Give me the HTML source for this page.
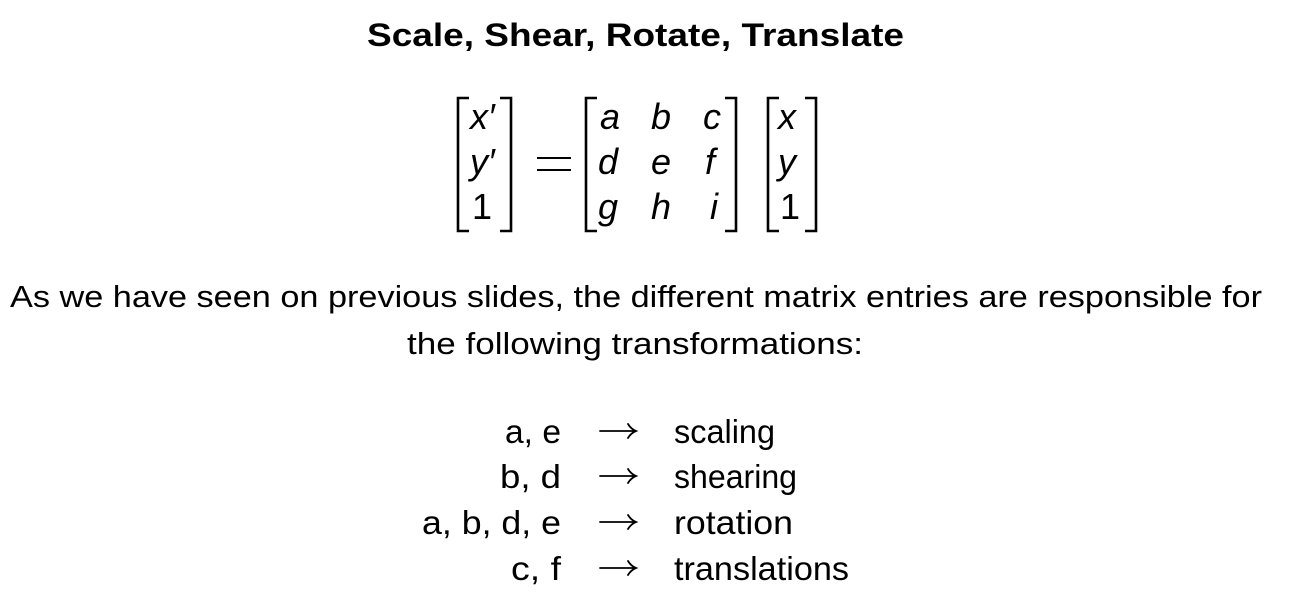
<!DOCTYPE html>
<html><head><meta charset="utf-8"><style>
html,body{margin:0;padding:0;background:#fff;width:1290px;height:604px;overflow:hidden}
svg{display:block}
text{font-family:"Liberation Sans",sans-serif;fill:#000}
.it{font-style:italic}
</style></head><body>
<svg width="1290" height="604" viewBox="0 0 1290 604">
<text x="367" y="46" font-size="32" font-weight="bold" textLength="537" lengthAdjust="spacingAndGlyphs">Scale, Shear, Rotate, Translate</text>
<g fill="none" stroke="#000" stroke-width="2.6">
<path d="M469 98H458V231H469"/>
<path d="M500 98H511V231H500"/>
<path d="M597 98H586V231H597"/>
<path d="M725 98H736V231H725"/>
<path d="M779 98H768V231H779"/>
<path d="M805 98H816V231H805"/>
<path d="M537 158H571M537 170H571" stroke-width="2"/>
</g>
<g font-size="36" class="it">
<text x="470" y="129">x′</text>
<text x="470" y="174">y′</text>
<text x="600" y="129">a</text>
<text x="651" y="129">b</text>
<text x="703" y="129">c</text>
<text x="598" y="174">d</text>
<text x="651" y="174">e</text>
<text x="705" y="174">f</text>
<text x="598" y="219">g</text>
<text x="651" y="219">h</text>
<text x="710" y="219">i</text>
<text x="778" y="129">x</text>
<text x="778" y="174">y</text>
</g>
<text x="472" y="219" font-size="36">1</text>
<text x="780" y="219" font-size="36">1</text>
<text x="10" y="307" font-size="31" textLength="1252" lengthAdjust="spacingAndGlyphs">As we have seen on previous slides, the different matrix entries are responsible for</text>
<text x="407" y="354" font-size="31" textLength="456" lengthAdjust="spacingAndGlyphs">the following transformations:</text>
<g font-size="33">
<text x="505" y="443" textLength="56" lengthAdjust="spacingAndGlyphs">a, e</text>
<text x="500" y="488" textLength="61" lengthAdjust="spacingAndGlyphs">b, d</text>
<text x="422" y="534" textLength="139" lengthAdjust="spacingAndGlyphs">a, b, d, e</text>
<text x="511" y="580" textLength="50" lengthAdjust="spacingAndGlyphs">c, f</text>
<text x="674" y="443" textLength="101" lengthAdjust="spacingAndGlyphs">scaling</text>
<text x="674" y="488" textLength="123" lengthAdjust="spacingAndGlyphs">shearing</text>
<text x="674" y="534" textLength="119" lengthAdjust="spacingAndGlyphs">rotation</text>
<text x="674" y="580" textLength="175" lengthAdjust="spacingAndGlyphs">translations</text>
</g>
<g fill="none" stroke="#000" stroke-width="1.8" stroke-linecap="round">
<path d="M600 431H635M628 424Q631 429 636 431Q631 433 628 438"/>
<path d="M600 476H635M628 469Q631 474 636 476Q631 478 628 483"/>
<path d="M600 522H635M628 515Q631 520 636 522Q631 524 628 529"/>
<path d="M600 568H635M628 561Q631 566 636 568Q631 570 628 575"/>
</g>
</svg>
</body></html>
